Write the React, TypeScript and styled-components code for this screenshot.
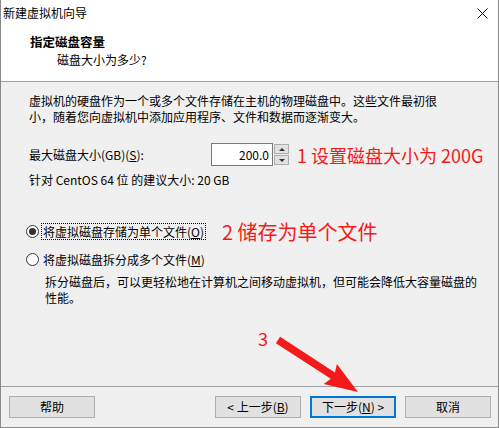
import React from "react";
import styled, { createGlobalStyle } from "styled-components";

const Global = createGlobalStyle`
  html, body { margin: 0; padding: 0; background: #f0f0f0; }
  body { font-family: "Noto Sans CJK SC", "Noto Sans", sans-serif; font-size: 12px; color: #000; }
  * { box-sizing: border-box; }
`;

const Window = styled.div`
  position: relative;
  width: 499px;
  height: 428px;
  display: flex;
  flex-direction: column;
  border-left: 1px solid #8a8a8a;
  border-right: 1px solid #8a8a8a;
  border-bottom: 1px solid #8a8a8a;
  background: #f0f0f0;
  overflow: hidden;
`;

const Header = styled.div`
  background: #fff;
  height: 82px;
  border-bottom: 1px solid #a0a0a0;
  display: flex;
  flex-direction: column;
`;

const TitleBar = styled.div`
  height: 26px;
  display: flex;
  align-items: center;
  justify-content: space-between;
  padding: 0 10px 0 2px;
  line-height: 26px;
`;

const CloseIcon = styled.svg`
  width: 11px;
  height: 11px;
`;

const HeaderTitle = styled.div`
  margin: 7px 0 0 29px;
  font-weight: bold;
  font-size: 12.5px;
  line-height: 17px;
`;

const HeaderSub = styled.div`
  margin: 1px 0 0 56px;
  line-height: 17px;
`;

const Body = styled.div`
  flex: 1;
  padding: 11px 20px 0 28px;
  display: flex;
  flex-direction: column;
`;

const Para = styled.div`
  line-height: 16px;
  white-space: nowrap;
`;

const SizeRow = styled.div`
  margin-top: 18px;
  display: flex;
  align-items: center;
  height: 23px;
  & > * {
    flex-shrink: 0;
  }
`;

const SizeLabel = styled.div`
  width: 182px;
  line-height: 16px;
`;

const SpinInput = styled.div`
  width: 62px;
  height: 23px;
  background: #fff;
  border: 1px solid #7a7a7a;
  text-align: right;
  padding: 0 3px;
  line-height: 21px;
`;

const SpinButtons = styled.div`
  display: flex;
  flex-direction: column;
  justify-content: space-between;
  margin-left: 1px;
  height: 21px;
`;

const SpinBtn = styled.div`
  width: 15px;
  height: 10px;
  background: #e1e1e1;
  border: 1px solid #adadad;
  display: flex;
  align-items: center;
  justify-content: center;
`;

const Tri = styled.span<{ $up?: boolean }>`
  width: 0;
  height: 0;
  border-left: 3px solid transparent;
  border-right: 3px solid transparent;
  ${(p) => (p.$up ? "border-bottom: 3px solid #333;" : "border-top: 3px solid #333;")}
`;

const Note = styled.span<{ $size: number; $ml: number }>`
  color: #f41a1a;
  font-size: ${(p) => p.$size}px;
  line-height: 1;
  margin-left: ${(p) => p.$ml}px;
  white-space: nowrap;
`;

const Recommend = styled.div`
  margin-top: 6px;
  line-height: 16px;
`;

const RadioRow = styled.div<{ $mt: number }>`
  margin-top: ${(p) => p.$mt}px;
  display: flex;
  align-items: center;
  height: 17px;
  margin-left: -3px;
`;

const RadioCircle = styled.span<{ $checked?: boolean }>`
  width: 13px;
  height: 13px;
  border-radius: 50%;
  border: 1px solid #333;
  background: #fff;
  display: flex;
  align-items: center;
  justify-content: center;
  margin-right: 3px;
  &::after {
    content: "";
    width: 7px;
    height: 7px;
    border-radius: 50%;
    background: ${(p) => (p.$checked ? "#333" : "transparent")};
  }
`;

const RadioLabel = styled.span<{ $focus?: boolean }>`
  line-height: 15px;
  padding: 0 1px;
  outline: ${(p) => (p.$focus ? "1px dotted #000" : "none")};
`;

const Desc = styled.div`
  margin: 6px 0 0 16px;
  line-height: 16px;
  width: 440px;
`;

const U = styled.span`
  text-decoration: underline;
`;

const Footer = styled.div`
  height: 41px;
  border-top: 1px solid #a0a0a0;
  display: flex;
  align-items: flex-start;
  padding: 9px 7px 0 8px;
  gap: 9px;
`;

const Button = styled.div<{ $default?: boolean }>`
  width: 86px;
  height: 22px;
  background: #e1e1e1;
  border: ${(p) => (p.$default ? "2px solid #0078d7" : "1px solid #adadad")};
  display: flex;
  align-items: center;
  justify-content: center;
  line-height: 16px;
`;

const Spacer = styled.div`
  flex: 1;
`;

const Overlay = styled.svg`
  position: absolute;
  left: 0;
  top: 0;
  width: 499px;
  height: 428px;
  pointer-events: none;
`;

const Three = styled.span`
  position: absolute;
  left: 257px;
  top: 327px;
  color: #f41a1a;
  font-size: 18px;
  line-height: 22px;
`;

function arrowPoints(): string {
  const tail = [277, 340];
  const tip = [357, 392];
  const dx = tip[0] - tail[0];
  const dy = tip[1] - tail[1];
  const len = Math.hypot(dx, dy);
  const u = [dx / len, dy / len];
  const n = [-u[1], u[0]];
  const hw = 3.8;
  const headLen = 30;
  const headHw = 12;
  const p = (t: number, s: number) =>
    `${(tail[0] + u[0] * t + n[0] * s).toFixed(1)},${(tail[1] + u[1] * t + n[1] * s).toFixed(1)}`;
  const b = len - headLen;
  return [p(0, -hw), p(b, -hw), p(b - 3, -headHw), p(len, 0), p(b - 3, headHw), p(b, hw), p(0, hw)].join(" ");
}

export default function App() {
  return (
    <>
      <Global />
      <Window>
        <Header>
          <TitleBar>
            <span>新建虚拟机向导</span>
            <CloseIcon viewBox="0 0 11 11">
              <path d="M0.5 0.5 L10.5 10.5 M10.5 0.5 L0.5 10.5" stroke="#000" strokeWidth="1" />
            </CloseIcon>
          </TitleBar>
          <HeaderTitle>指定磁盘容量</HeaderTitle>
          <HeaderSub>磁盘大小为多少?</HeaderSub>
        </Header>
        <Body>
          <Para>
            虚拟机的硬盘作为一个或多个文件存储在主机的物理磁盘中。这些文件最初很
            <br />
            小，随着您向虚拟机中添加应用程序、文件和数据而逐渐变大。
          </Para>
          <SizeRow>
            <SizeLabel>
              最大磁盘大小(GB)(<U>S</U>):
            </SizeLabel>
            <SpinInput>200.0</SpinInput>
            <SpinButtons>
              <SpinBtn>
                <Tri $up />
              </SpinBtn>
              <SpinBtn>
                <Tri />
              </SpinBtn>
            </SpinButtons>
            <Note $size={18} $ml={8}>
              1 设置磁盘大小为 200G
            </Note>
          </SizeRow>
          <Recommend>针对 CentOS 64 位 的建议大小: 20 GB</Recommend>
          <RadioRow $mt={35}>
            <RadioCircle $checked />
            <RadioLabel $focus>
              将虚拟磁盘存储为单个文件(<U>O</U>)
            </RadioLabel>
            <Note $size={20} $ml={17}>
              2 储存为单个文件
            </Note>
          </RadioRow>
          <RadioRow $mt={11}>
            <RadioCircle />
            <RadioLabel>
              将虚拟磁盘拆分成多个文件(<U>M</U>)
            </RadioLabel>
          </RadioRow>
          <Desc>拆分磁盘后，可以更轻松地在计算机之间移动虚拟机，但可能会降低大容量磁盘的性能。</Desc>
        </Body>
        <Footer>
          <Button>帮助</Button>
          <Spacer />
          <Button>
            &lt; 上一步(<U>B</U>)
          </Button>
          <Button $default>
            下一步(<U>N</U>) &gt;
          </Button>
          <Button>取消</Button>
        </Footer>
        <Overlay viewBox="0 0 499 428">
          <polygon points={arrowPoints()} fill="#f41a1a" />
        </Overlay>
        <Three>3</Three>
      </Window>
    </>
  );
}
